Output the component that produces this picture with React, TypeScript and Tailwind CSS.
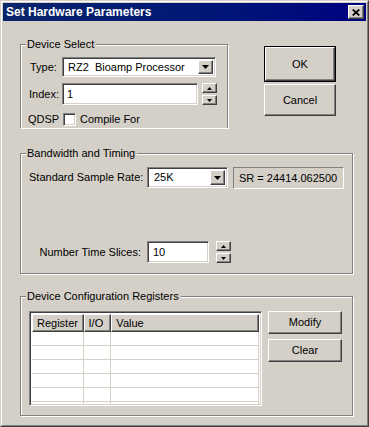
import React from "react";

const raised =
  "border border-t-white border-l-white border-r-[#404040] border-b-[#404040] shadow-[inset_-1px_-1px_0_#808080] bg-[#d4d0c8]";
const sunken =
  "border border-t-[#808080] border-l-[#808080] border-r-white border-b-white shadow-[inset_1px_1px_0_#404040,inset_-1px_-1px_0_#d4d0c8]";
const group =
  "relative border border-[#808080] shadow-[inset_1px_1px_0_#fff,1px_1px_0_#fff]";

function DownArrow() {
  return (
    <svg width="7" height="4" viewBox="0 0 7 4">
      <polygon points="0,0 7,0 3.5,4" fill="#000" />
    </svg>
  );
}

function SpinArrow({ up }: { up?: boolean }) {
  return (
    <svg width="5" height="3" viewBox="0 0 5 3">
      <polygon points={up ? "0,3 5,3 2.5,0" : "0,0 5,0 2.5,3"} fill="#000" />
    </svg>
  );
}

function Spin() {
  return (
    <div className="flex flex-col gap-[2px]">
      <div className={`${raised} w-[15px] h-[10px] flex items-center justify-center`}>
        <SpinArrow up />
      </div>
      <div className={`${raised} w-[15px] h-[10px] flex items-center justify-center`}>
        <SpinArrow />
      </div>
    </div>
  );
}

function Legend({ children }: { children: React.ReactNode }) {
  return (
    <span className="absolute left-[5px] top-[-7px] pl-[1px] pr-[2px] bg-[#d4d0c8] leading-[13px] whitespace-nowrap">
      {children}
    </span>
  );
}

export default function App() {
  const rows = [0, 1, 2, 3, 4, 5];
  return (
    <div className="w-[369px] h-[427px] bg-[#d4d0c8] border border-t-[#d4d0c8] border-l-[#d4d0c8] border-r-[#404040] border-b-[#404040] font-['Liberation_Sans',Arial,sans-serif] text-[11px] text-black leading-[13px]">
      <div className="h-full border border-t-white border-l-white border-r-[#808080] border-b-[#808080] p-[1px] flex flex-col">
        {/* Title bar */}
        <div className="h-[18px] shrink-0 flex items-center justify-between bg-linear-to-r from-[#0a246a] to-[#000080] pl-[3px] pr-[2px]">
          <span className="text-white font-bold text-[12px] leading-[18px]">
            Set Hardware Parameters
          </span>
          <div className={`${raised} w-[16px] h-[14px] flex items-center justify-center`}>
            <svg width="8" height="7" viewBox="0 0 8 7">
              <path d="M0.7 0.5 L7.3 6.5 M7.3 0.5 L0.7 6.5" stroke="#000" strokeWidth="1.7" />
            </svg>
          </div>
        </div>

        <div className="flex flex-col pl-[17px]">
          {/* Top row */}
          <div className="flex items-start mt-[23px]">
            <div className={`${group} border-b-0 shadow-[inset_1px_1px_0_#fff,1px_0_0_#fff] w-[208px] h-[84px] pl-[9px] pt-[12px]`}>
              <Legend>Device Select</Legend>
              <div className="flex items-center h-[20px]">
                <span className="w-[32px] shrink-0 whitespace-nowrap">Type:</span>
                <div className={`${sunken} bg-white w-[154px] h-[20px] flex items-center p-[2px]`}>
                  <span className="flex-1 pl-[3px] whitespace-pre">RZ2  Bioamp Processor</span>
                  <div className={`${raised} w-[15px] h-full flex items-center justify-center`}>
                    <DownArrow />
                  </div>
                </div>
              </div>
              <div className="flex items-center h-[22px] mt-[6px]">
                <span className="w-[33px] shrink-0 ml-[-1px] whitespace-nowrap">Index:</span>
                <div className={`${sunken} bg-white w-[136px] h-[22px] flex items-center pl-[4px]`}>
                  1
                </div>
                <div className="ml-[4px]">
                  <Spin />
                </div>
              </div>
              <div className="flex items-center h-[13px] mt-[8px]">
                <span className="w-[35px] shrink-0 ml-[-2px] whitespace-nowrap">QDSP</span>
                <div className={`${sunken} bg-white w-[13px] h-[13px]`} />
                <span className="ml-[4px] whitespace-nowrap">Compile For</span>
              </div>
            </div>
            <div className="ml-[36px] mt-[2px] flex flex-col gap-[2px]">
              <div className="w-[72px] h-[36px] border border-black flex">
                <div className={`${raised} flex-1 flex items-center justify-center`}>OK</div>
              </div>
              <div className={`${raised} w-[72px] h-[32px] flex items-center justify-center`}>
                Cancel
              </div>
            </div>
          </div>

          {/* Bandwidth and Timing */}
          <div className={`${group} mt-[25px] w-[333px] h-[121px] pl-[8px] pt-[13px]`}>
            <Legend>Bandwidth and Timing</Legend>
            <div className="flex items-start h-[22px]">
              <span className="w-[118px] shrink-0 leading-[21px] whitespace-nowrap">Standard Sample Rate:</span>
              <div className={`${sunken} bg-white w-[81px] h-[21px] flex items-center p-[2px]`}>
                <span className="flex-1 pl-[4px]">25K</span>
                <div className={`${raised} w-[15px] h-full flex items-center justify-center`}>
                  <DownArrow />
                </div>
              </div>
              <div className="ml-[5px] w-[111px] h-[22px] border border-t-[#808080] border-l-[#808080] border-r-white border-b-white flex items-center pl-[5px] whitespace-nowrap">
                SR = 24414.062500
              </div>
            </div>
            <div className="flex items-center h-[22px] mt-[52px]">
              <span className="w-[118px] shrink-0 pr-[6px] text-right whitespace-nowrap">Number Time Slices:</span>
              <div className={`${sunken} bg-white w-[62px] h-[22px] flex items-center pl-[5px]`}>
                10
              </div>
              <div className="ml-[7px]">
                <Spin />
              </div>
            </div>
          </div>

          {/* Device Configuration Registers */}
          <div className={`${group} mt-[22px] w-[333px] h-[120px] pl-[8px] pt-[14px] flex items-start`}>
            <Legend>Device Configuration Registers</Legend>
            <div className={`${sunken} bg-white w-[233px] h-[95px] p-[2px] overflow-hidden flex flex-col`}>
              <div className="flex h-[18px] shrink-0">
                <div className={`${raised} w-[52px] h-full flex items-center pl-[4px]`}>Register</div>
                <div className={`${raised} w-[28px] h-full flex items-center pl-[4px]`}>I/O</div>
                <div className={`${raised} w-[149px] h-full flex items-center pl-[4px]`}>Value</div>
              </div>
              {rows.map((r) => (
                <div key={r} className="flex h-[14px] shrink-0 border-b border-[#d4d0c8]">
                  <div className="w-[52px] h-full border-r border-[#d4d0c8]" />
                  <div className="w-[28px] h-full border-r border-[#d4d0c8]" />
                  <div className="w-[149px] h-full border-r border-[#d4d0c8]" />
                </div>
              ))}
            </div>
            <div className="ml-[6px] flex flex-col gap-[5px]">
              <div className={`${raised} w-[74px] h-[23px] flex items-center justify-center`}>Modify</div>
              <div className={`${raised} w-[74px] h-[23px] flex items-center justify-center`}>Clear</div>
            </div>
          </div>
        </div>
      </div>
    </div>
  );
}
